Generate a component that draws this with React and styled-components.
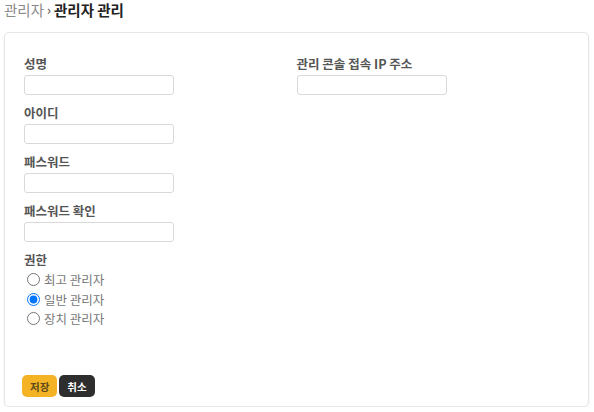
import React from 'react'
import styled, { createGlobalStyle } from 'styled-components'

const GlobalStyle = createGlobalStyle`
  html, body {
    margin: 0;
    padding: 0;
    background: #ffffff;
    font-family: "Noto Sans CJK KR", "Noto Sans", sans-serif;
  }
`

const Page = styled.div`
  padding: 0 5px 0 4px;
`

const Breadcrumb = styled.h1`
  margin: 0;
  height: 26px;
  display: flex;
  align-items: center;
  gap: 3px;
  font-size: 14.5px;
  font-weight: 400;
  color: #8a8a8a;
  line-height: 20px;
  margin-top: -3px;
`

const Current = styled.span`
  font-weight: 700;
  color: #222222;
`

const Sep = styled.span`
  color: #444444;
  font-size: 13px;
`

const Card = styled.div`
  margin-top: 9px;
  height: 375px;
  box-sizing: border-box;
  border: 1px solid #e6e6e6;
  border-radius: 5px;
  box-shadow: 0 1px 3px rgba(0, 0, 0, 0.06);
  padding: 23px 19px 9px;
  display: flex;
  flex-direction: column;
`

const Columns = styled.div`
  display: grid;
  grid-template-columns: 1fr 1fr;
  flex: 1;
`

const Column = styled.div`
  display: flex;
  flex-direction: column;
`

const Field = styled.div`
  display: flex;
  flex-direction: column;
  margin-bottom: 10px;
`

const Label = styled.label`
  font-size: 12.5px;
  font-weight: 700;
  color: #555555;
  line-height: 16px;
  margin-bottom: ${(p) => (p.$tight ? '2px' : '3px')};
`

const Input = styled.input`
  width: 150px;
  height: 20px;
  box-sizing: border-box;
  border: 1px solid #d9d9d9;
  border-radius: 3px;
  padding: 0 6px;
  font-size: 12px;
  outline: none;
`

const RadioGroup = styled.div`
  display: flex;
  flex-direction: column;
  margin-left: 3px;
`

const RadioRow = styled.label`
  display: flex;
  align-items: center;
  height: 19.5px;
  font-size: 12.5px;
  color: #777777;
  gap: 4px;
`

const Radio = styled.input`
  margin: 0;
  width: 13px;
  height: 13px;
`

const Footer = styled.div`
  display: flex;
  gap: 2px;
  margin-left: -2px;
`

const Button = styled.button`
  height: 22px;
  padding: 0 8px;
  border: none;
  border-radius: 5px;
  font-family: inherit;
  font-size: 10.5px;
  font-weight: 700;
  cursor: pointer;
  background: ${(p) => (p.$variant === 'dark' ? '#2e2e2e' : '#f4b324')};
  color: ${(p) => (p.$variant === 'dark' ? '#ffffff' : '#5a4a1c')};
`

const TextField = ({ label }) => (
  <Field>
    <Label>{label}</Label>
    <Input type="text" />
  </Field>
)

const roles = ['최고 관리자', '일반 관리자', '장치 관리자']

const App = () => (
  <Page>
    <GlobalStyle />
    <Breadcrumb>
      관리자<Sep>›</Sep><Current>관리자 관리</Current>
    </Breadcrumb>
    <Card>
      <Columns>
        <Column>
          <TextField label="성명" />
          <TextField label="아이디" />
          <TextField label="패스워드" />
          <TextField label="패스워드 확인" />
          <Field>
            <Label $tight>권한</Label>
            <RadioGroup>
              {roles.map((role) => (
                <RadioRow key={role}>
                  <Radio type="radio" name="role" defaultChecked={role === '일반 관리자'} />
                  {role}
                </RadioRow>
              ))}
            </RadioGroup>
          </Field>
        </Column>
        <Column>
          <TextField label="관리 콘솔 접속 IP 주소" />
        </Column>
      </Columns>
      <Footer>
        <Button $variant="primary">저장</Button>
        <Button $variant="dark">취소</Button>
      </Footer>
    </Card>
  </Page>
)

export default App
